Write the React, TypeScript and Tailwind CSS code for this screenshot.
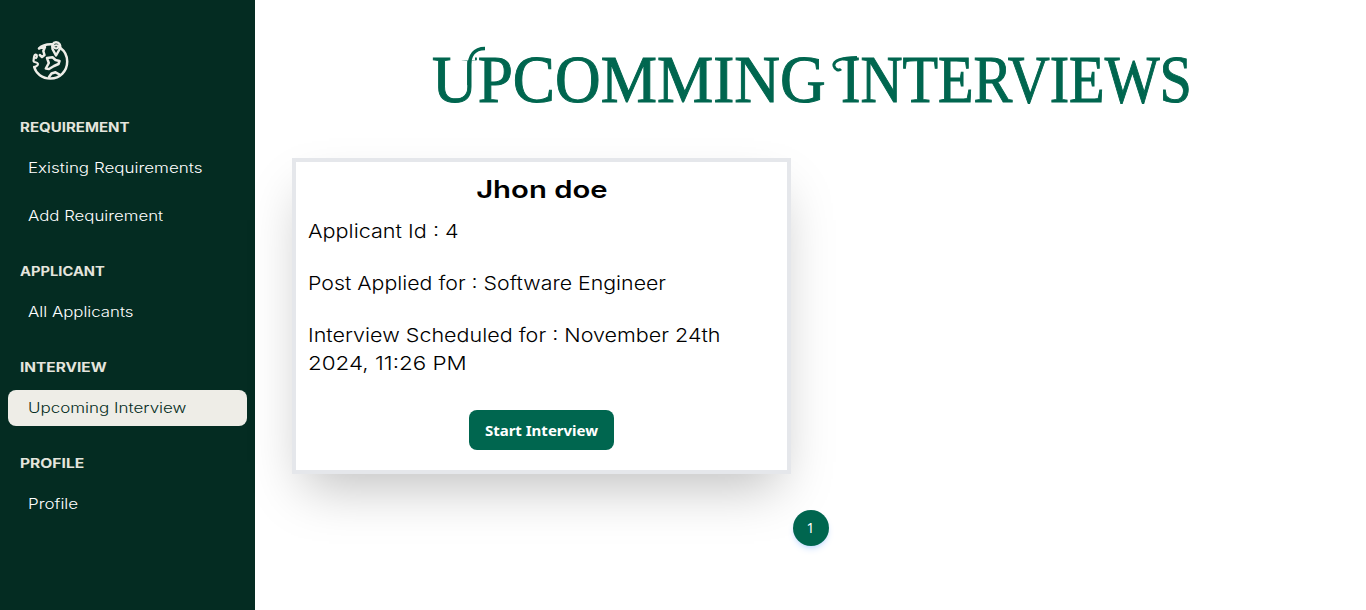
const wide = "inline-block origin-left whitespace-nowrap";

type Item = { label: string; scale: string; active?: boolean };
type Section = { title: string; scale: string; items: Item[] };

const sections: Section[] = [
  {
    title: "REQUIREMENT",
    scale: "scale-x-[1.157]",
    items: [
      { label: "Existing Requirements", scale: "scale-x-[1.213]" },
      { label: "Add Requirement", scale: "scale-x-[1.2]" },
    ],
  },
  { title: "APPLICANT", scale: "scale-x-[1.13]", items: [{ label: "All Applicants", scale: "scale-x-[1.2]" }] },
  {
    title: "INTERVIEW",
    scale: "scale-x-[1.185]",
    items: [{ label: "Upcoming Interview", scale: "scale-x-[1.213]", active: true }],
  },
  { title: "PROFILE", scale: "scale-x-[1.2]", items: [{ label: "Profile", scale: "scale-x-[1.213]" }] },
];

function Logo() {
  return (
    <svg width="40" height="42" viewBox="0 0 40 42" fill="none" stroke="#eeede7" strokeWidth="2.5" strokeLinecap="round" strokeLinejoin="round">
      <path d="M9 8.500C12 5.500 16 4 22 4.300M30.500 8C34.500 11 37.200 16 37.200 21.500C37.200 31 30 38.500 20.500 38.500C12 38.500 6 33.500 4.200 27" />
      <path d="M26 15.500L22.500 9C21.500 5.500 23 2.300 26 2.300C29.500 2.300 31 5.500 30 8.500Z" />
      <path d="M23 6.500C25 4.500 28.500 5 28.500 6.500C28 9 24.500 9 23 6.500Z" strokeWidth="2" />
      <path d="M10 8L15 7L13.300 11L14.500 15L12 17L9.800 15" />
      <path d="M5.500 14.500C3.500 15 4 19 3.500 21C3.500 23 7.500 21.500 8 24C8 26 6 26 5 27M5.500 14.500C7.500 14.500 7 17 6 18" strokeWidth="2.2" />
      <path d="M17 18L22.500 17.300L25.500 20L29.500 21L28.500 24L24 26L19 29L15.800 28.500L18.800 23Z" />
      <path d="M19 37L21.500 33.500L25.500 32.300L29.500 34.500" />
    </svg>
  );
}

function Sidebar() {
  return (
    <aside className="flex h-full w-[255px] shrink-0 flex-col bg-[#042c22] px-2 pt-10">
      <div className="flex h-[69px] pl-[22px]">
        <Logo />
      </div>
      {sections.map((s) => (
        <section key={s.title} className="mb-[19px] flex flex-col">
          <h2 className="flex h-9 items-center pl-3 text-[13px] leading-5 font-bold text-[#e4e5dd]">
            <span className={`${wide} ${s.scale}`}>{s.title}</span>
          </h2>
          <div className="mt-[5px] flex flex-col gap-3">
            {s.items.map((i) => (
              <a
                key={i.label}
                className={`flex h-9 items-center rounded-lg pl-5 text-[14px] leading-5 font-light ${
                  i.active ? "bg-[#eeede7] text-[#042c22]" : "text-white"
                }`}
              >
                <span className={`${wide} ${i.scale}`}>{i.label}</span>
              </a>
            ))}
          </div>
        </section>
      ))}
    </aside>
  );
}

function Title() {
  return (
    <h1 className="relative flex h-[72px] w-[758px] font-['Liberation_Serif',serif] text-[68px] leading-[72px] text-[#00664f] [-webkit-text-stroke:1px_#00664f]">
      <span className="w-[409px]">
        <span className={`${wide} scale-x-[0.93]`}>UPCOMMING</span>
      </span>{" "}
      <span>
        <span className={`${wide} scale-x-[0.856]`}>INTERVIEWS</span>
      </span>
      <svg className="absolute top-0 left-0" width="440" height="70" fill="none" stroke="#00664f">
        <path d="M28 15H43" stroke="#fff" strokeWidth="5" />
        <path d="M37 42V26C37 12 42 5.500 53 5.500" strokeWidth="3.6" />
        <path d="M425 14.500C410 15 401 17 402 23C403 27 407 28 409 26" strokeWidth="3" />
      </svg>
    </h1>
  );
}

function InterviewCard() {
  return (
    <article className="flex h-[316px] w-[499px] flex-col border-4 border-gray-200 bg-white px-3 pt-3 text-black shadow-2xl">
      <h2 className="text-center text-2xl leading-8 font-semibold">
        <span className="inline-block scale-x-[1.22]">Jhon doe</span>
      </h2>
      <div className="mt-3 flex flex-col gap-6 text-[19px] leading-7 font-light">
        <p>
          <span className={`${wide} scale-x-[1.138]`}>Applicant Id : 4</span>
        </p>
        <p>
          <span className={`${wide} scale-x-[1.122]`}>Post Applied for : Software Engineer</span>
        </p>
        <p>
          <span className={`${wide} scale-x-[1.133]`}>Interview Scheduled for : November 24th</span>{" "}
          <span className={`${wide} scale-x-[1.18]`}>2024, 11:26 PM</span>
        </p>
      </div>
      <button className="mt-8 h-10 w-[145px] self-center rounded-lg bg-[#00664f] font-['Noto_Sans',sans-serif] text-[15px] font-bold text-white">
        Start Interview
      </button>
    </article>
  );
}

export default function App() {
  return (
    <div className="flex h-[610px] overflow-hidden bg-white font-['Inter',sans-serif]">
      <Sidebar />
      <main className="flex min-w-0 flex-1 flex-col">
        <header className="flex h-[158px] justify-center pt-[43px]">
          <Title />
        </header>
        <div className="pl-[37px]">
          <InterviewCard />
        </div>
        <nav className="mt-9 flex justify-center">
          <button className="size-9 rounded-full bg-[#00664f] font-['Noto_Sans',sans-serif] text-sm text-white shadow-md shadow-blue-500/20">
            1
          </button>
        </nav>
      </main>
    </div>
  );
}
